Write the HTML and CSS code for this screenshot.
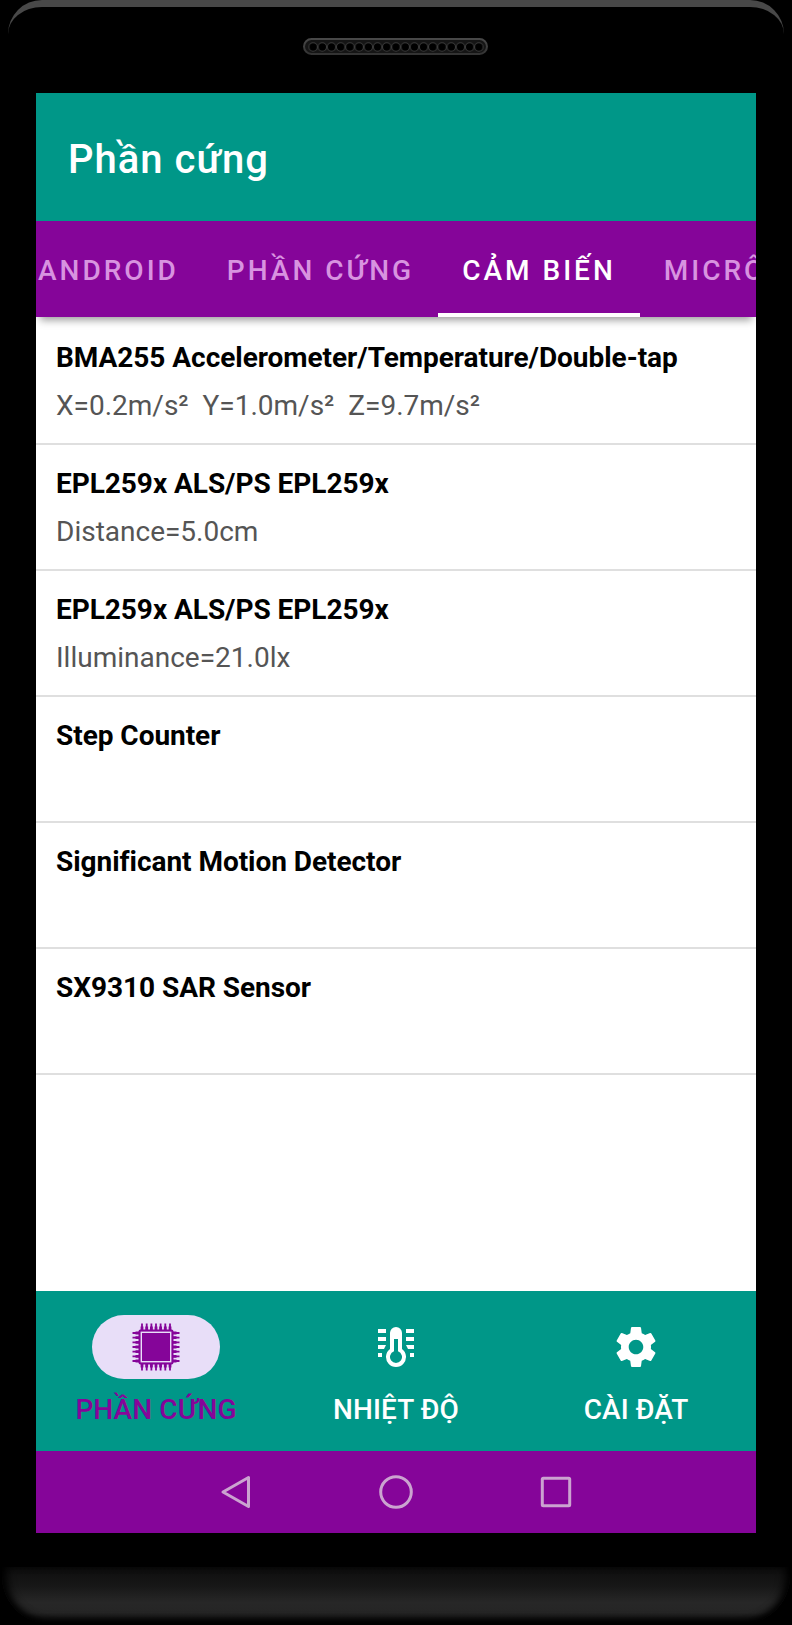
FILE: index.html
```html
<!DOCTYPE html>
<html lang="vi">
<head>
    <meta charset="UTF-8">
    <meta name="viewport" content="width=device-width, initial-scale=1.0">
    <title>Phần cứng</title>
    <link rel="stylesheet" href="styles.css">
</head>
<body>
    <div class="phone">
        <div class="phone-top">
            <svg class="speaker" width="188" height="20" viewBox="0 0 188 20">
                <defs>
                    <pattern id="holes" x="6.5" y="3" width="9.21" height="14" patternUnits="userSpaceOnUse">
                        <circle cx="4.6" cy="7" r="4.2" fill="#000" stroke="#3a3a3a" stroke-width="1"/>
                    </pattern>
                    <linearGradient id="rim" x1="0" y1="0" x2="0" y2="1">
                        <stop offset="0" stop-color="#484848"/>
                        <stop offset="1" stop-color="#333"/>
                    </linearGradient>
                </defs>
                <rect x="2" y="2" width="183" height="15" rx="7.5" fill="#151515" stroke="url(#rim)" stroke-width="2"/>
                <rect x="6.5" y="4.5" width="175" height="11.5" fill="url(#holes)"/>
            </svg>
        </div>

        <div class="screen">
            <header class="app-bar">
                <h1>Phần cứng</h1>
            </header>
            <nav class="tabs">
                <a class="tab">ANDROID</a>
                <a class="tab">PHẦN CỨNG</a>
                <a class="tab active">CẢM BIẾN</a>
                <a class="tab">MICRÔ</a>
            </nav>

            <ul class="sensor-list">
                <li>
                    <h2>BMA255 Accelerometer/Temperature/Double-tap</h2>
                    <p>X=0.2m/s²&nbsp; Y=1.0m/s²&nbsp; Z=9.7m/s²</p>
                </li>
                <li>
                    <h2>EPL259x ALS/PS EPL259x</h2>
                    <p>Distance=5.0cm</p>
                </li>
                <li>
                    <h2>EPL259x ALS/PS EPL259x</h2>
                    <p>Illuminance=21.0lx</p>
                </li>
                <li>
                    <h2>Step Counter</h2>
                </li>
                <li>
                    <h2>Significant Motion Detector</h2>
                </li>
                <li>
                    <h2>SX9310 SAR Sensor</h2>
                </li>
            </ul>

            <nav class="bottom-nav">
                <a class="nav-item active">
                    <span class="nav-icon">
                        <svg width="48" height="48" viewBox="0 0 48 48">
                            <path stroke="currentColor" stroke-width="1.8" d="M10 0.500v47M14.700 0.500v47M19.400 0.500v47M24 0.500v47M28.600 0.500v47M33.300 0.500v47M38 0.500v47M0.500 10h47M0.500 14.700h47M0.500 19.400h47M0.500 24h47M0.500 28.600h47M0.500 33.300h47M0.500 38h47"/>
                            <path stroke="currentColor" stroke-width="2.8" d="M10 3.500v41M14.700 3.500v41M19.400 3.500v41M24 3.500v41M28.600 3.500v41M33.300 3.500v41M38 3.500v41M3.500 10h41M3.500 14.700h41M3.500 19.400h41M3.500 24h41M3.500 28.600h41M3.500 33.300h41M3.500 38h41"/>
                            <rect x="6.500" y="6.500" width="35" height="35" rx="2" fill="currentColor"/>
                            <rect x="9.300" y="9.300" width="29.400" height="29.400" fill="none" stroke="#e8def8" stroke-width="1.400"/>
                        </svg>
                    </span>
                    <span class="nav-label">PHẦN CỨNG</span>
                </a>
                <a class="nav-item">
                    <span class="nav-icon">
                        <svg width="48" height="48" viewBox="0 0 48 48">
                            <path fill="currentColor" d="M6 6h8v4H6zM6 14h8v4H6zM6 22h8l-2 4H6zM6 30h4v4H6zM34 6h8v4h-8zM34 14h8v4h-8zM34 22h8v4h-6zM38 30h4v4h-4z"/>
                            <path fill="currentColor" fill-rule="evenodd" d="M24 4a6 6 0 0 0-6 6v16a10 10 0 1 0 12 0V10a6 6 0 0 0-6-6zM22 16h4v12.300a6 6 0 1 1-4 0z"/>
                        </svg>
                    </span>
                    <span class="nav-label">NHIỆT ĐỘ</span>
                </a>
                <a class="nav-item">
                    <span class="nav-icon">
                        <svg width="50" height="50" viewBox="0 0 24 24">
                            <path fill="currentColor" d="M19.140 12.940c.04-.3.060-.61.060-.94 0-.32-.02-.64-.07-.94l2.030-1.580c.18-.14.230-.41.120-.61l-1.920-3.320c-.12-.22-.37-.29-.59-.22l-2.390.96c-.5-.38-1.030-.7-1.620-.94l-.36-2.540c-.04-.24-.24-.41-.48-.41h-3.840c-.24 0-.43.170-.47.410l-.36 2.540c-.59.240-1.130.570-1.620.940l-2.390-.96c-.22-.08-.47 0-.59.220L2.740 8.870c-.12.210-.08.470.12.610l2.030 1.580c-.05.300-.09.630-.09.940s.02.640.07.940l-2.030 1.580c-.18.140-.23.410-.12.610l1.920 3.320c.12.220.37.290.59.220l2.390-.96c.5.380 1.030.700 1.620.940l.36 2.540c.05.240.24.410.48.410h3.840c.24 0 .44-.17.470-.41l.36-2.540c.59-.24 1.130-.56 1.620-.94l2.390.960c.22.080.47 0 .59-.22l1.920-3.320c.12-.22.070-.47-.12-.61l-2.010-1.580zM12 15.500c-1.930 0-3.500-1.570-3.500-3.500s1.570-3.500 3.500-3.500 3.500 1.570 3.500 3.500-1.570 3.500-3.500 3.500z"/>
                        </svg>
                    </span>
                    <span class="nav-label">CÀI ĐẶT</span>
                </a>
            </nav>

            <div class="system-bar">
                <svg width="36" height="36" viewBox="0 0 36 36"><path d="M30.500 3.500v29L5 18z"/></svg>
                <svg width="36" height="36" viewBox="0 0 36 36"><circle cx="18" cy="18" r="15.300"/></svg>
                <svg width="36" height="36" viewBox="0 0 36 36"><rect x="4.300" y="4.300" width="27.400" height="27.400" rx="1"/></svg>
            </div>
        </div>

        <div class="phone-bottom"></div>
    </div>
</body>
</html>
```

FILE: styles.css
```css
body {
    margin: 0;
    background-color: #000;
    font-family: Roboto, sans-serif;
}
h1, h2, p, ul {
    margin: 0;
    padding: 0;
}
.phone {
    display: flex;
    flex-direction: column;
    align-items: center;
    width: 792px;
    height: 1625px;
    background: #000;
    overflow: hidden;
}

/* Device frame */
.phone-top {
    display: flex;
    justify-content: center;
    box-sizing: border-box;
    width: 776px;
    height: 93px;
    padding-top: 30px;
    border-top: 7px solid #484848;
    border-radius: 34px 34px 0 0;
}
.speaker {
    display: block;
}
.phone-bottom {
    box-sizing: border-box;
    width: 788px;
    height: 57px;
    margin-top: 34px;
    border-radius: 0 0 48px 48px;
    background: linear-gradient(#0d0d0d, #181818 35%, #272727 62%, #252525 80%, #060606);
    box-shadow: inset 8px 0 10px -4px #000, inset -8px 0 10px -4px #000, inset 0 -5px 8px -2px #000;
}

/* Screen */
.screen {
    display: flex;
    flex-direction: column;
    width: 720px;
    height: 1440px;
    flex-shrink: 0;
    background: #fff;
    overflow: hidden;
}
.app-bar {
    display: flex;
    align-items: center;
    height: 128px;
    padding: 5px 32px 0;
    box-sizing: border-box;
    background: #009788;
    color: #fff;
}
.app-bar h1 {
    font-size: 40px;
    font-weight: 500;
    letter-spacing: 1px;
    line-height: 48px;
}
.tabs {
    display: flex;
    flex-shrink: 0;
    height: 96px;
    background: #850599;
    box-shadow: 0 7px 8px -4px rgba(0, 0, 0, 0.4);
}
.tab {
    display: flex;
    align-items: center;
    box-sizing: border-box;
    flex-shrink: 0;
    padding: 6px 24px 0;
    border-bottom: 4px solid transparent;
    color: #d893e0;
    font-size: 28px;
    font-weight: 500;
    letter-spacing: 3px;
    white-space: nowrap;
}
.tab:first-child {
    margin-left: -22px;
}
.tab.active {
    color: #fff;
    border-bottom-color: #fff;
}

.sensor-list {
    flex: 1;
    list-style: none;
}
.sensor-list li {
    box-sizing: border-box;
    height: 126px;
    padding: 22px 20px 0;
    border-bottom: 2px solid #dfdfdf;
}
.sensor-list li:first-child {
    height: 128px;
    padding-top: 24px;
}
.sensor-list h2 {
    color: #000;
    font-size: 28px;
    font-weight: 700;
    letter-spacing: -0.04px;
    line-height: 33px;
}
.sensor-list p {
    margin-top: 15px;
    color: #555;
    font-size: 28px;
    line-height: 33px;
}

.bottom-nav {
    display: flex;
    flex-shrink: 0;
    height: 160px;
    background: #009788;
    color: #fff;
}
.nav-item {
    display: flex;
    flex: 1;
    flex-direction: column;
    align-items: center;
    padding-top: 24px;
}
.nav-item.active {
    color: #850599;
}
.nav-icon {
    display: flex;
    align-items: center;
    justify-content: center;
    width: 128px;
    height: 64px;
    border-radius: 32px;
}
.nav-item.active .nav-icon {
    background: #e8def8;
}
.nav-label {
    margin-top: 14px;
    font-size: 28px;
    font-weight: 500;
    letter-spacing: 0.1px;
    line-height: 33px;
}

.system-bar {
    display: flex;
    flex-shrink: 0;
    align-items: center;
    justify-content: center;
    gap: 124px;
    height: 82px;
    background: #850599;
}
.system-bar svg {
    fill: none;
    stroke: #cba3d0;
    stroke-width: 3;
    stroke-linejoin: round;
}
```
